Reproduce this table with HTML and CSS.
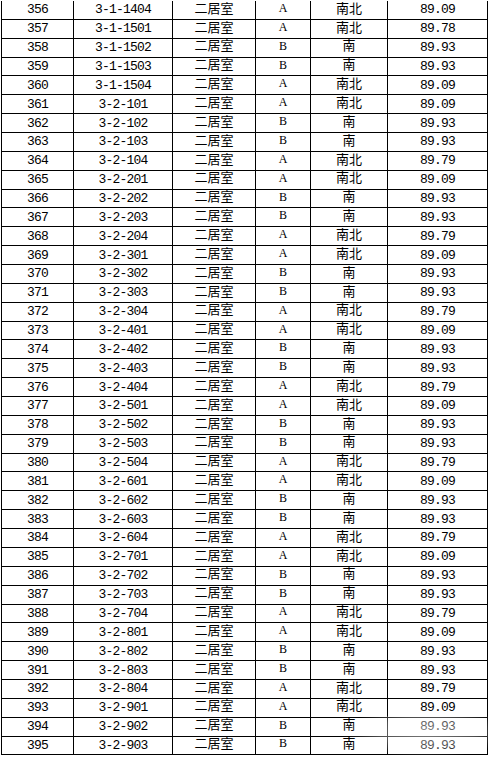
FILE: index.html
```html
<!DOCTYPE html>
<html lang="zh-CN">
<head>
<meta charset="utf-8">
<title>房源列表</title>
<link rel="stylesheet" href="styles.css">
</head>
<body>
<div class="sheet">
<table class="units">
<colgroup>
<col class="c-no"><col class="c-room"><col class="c-type"><col class="c-kind"><col class="c-dir"><col class="c-area">
</colgroup>
<tbody>
<tr><td class="num">356</td><td class="num">3-1-1404</td><td class="cjk">二居室</td><td class="lat">A</td><td class="cjk">南北</td><td class="num">89.09</td></tr>
<tr><td class="num">357</td><td class="num">3-1-1501</td><td class="cjk">二居室</td><td class="lat">A</td><td class="cjk">南北</td><td class="num">89.78</td></tr>
<tr><td class="num">358</td><td class="num">3-1-1502</td><td class="cjk">二居室</td><td class="lat">B</td><td class="cjk">南</td><td class="num">89.93</td></tr>
<tr><td class="num">359</td><td class="num">3-1-1503</td><td class="cjk">二居室</td><td class="lat">B</td><td class="cjk">南</td><td class="num">89.93</td></tr>
<tr><td class="num">360</td><td class="num">3-1-1504</td><td class="cjk">二居室</td><td class="lat">A</td><td class="cjk">南北</td><td class="num">89.09</td></tr>
<tr><td class="num">361</td><td class="num">3-2-101</td><td class="cjk">二居室</td><td class="lat">A</td><td class="cjk">南北</td><td class="num">89.09</td></tr>
<tr><td class="num">362</td><td class="num">3-2-102</td><td class="cjk">二居室</td><td class="lat">B</td><td class="cjk">南</td><td class="num">89.93</td></tr>
<tr><td class="num">363</td><td class="num">3-2-103</td><td class="cjk">二居室</td><td class="lat">B</td><td class="cjk">南</td><td class="num">89.93</td></tr>
<tr><td class="num">364</td><td class="num">3-2-104</td><td class="cjk">二居室</td><td class="lat">A</td><td class="cjk">南北</td><td class="num">89.79</td></tr>
<tr><td class="num">365</td><td class="num">3-2-201</td><td class="cjk">二居室</td><td class="lat">A</td><td class="cjk">南北</td><td class="num">89.09</td></tr>
<tr><td class="num">366</td><td class="num">3-2-202</td><td class="cjk">二居室</td><td class="lat">B</td><td class="cjk">南</td><td class="num">89.93</td></tr>
<tr><td class="num">367</td><td class="num">3-2-203</td><td class="cjk">二居室</td><td class="lat">B</td><td class="cjk">南</td><td class="num">89.93</td></tr>
<tr><td class="num">368</td><td class="num">3-2-204</td><td class="cjk">二居室</td><td class="lat">A</td><td class="cjk">南北</td><td class="num">89.79</td></tr>
<tr><td class="num">369</td><td class="num">3-2-301</td><td class="cjk">二居室</td><td class="lat">A</td><td class="cjk">南北</td><td class="num">89.09</td></tr>
<tr><td class="num">370</td><td class="num">3-2-302</td><td class="cjk">二居室</td><td class="lat">B</td><td class="cjk">南</td><td class="num">89.93</td></tr>
<tr><td class="num">371</td><td class="num">3-2-303</td><td class="cjk">二居室</td><td class="lat">B</td><td class="cjk">南</td><td class="num">89.93</td></tr>
<tr><td class="num">372</td><td class="num">3-2-304</td><td class="cjk">二居室</td><td class="lat">A</td><td class="cjk">南北</td><td class="num">89.79</td></tr>
<tr><td class="num">373</td><td class="num">3-2-401</td><td class="cjk">二居室</td><td class="lat">A</td><td class="cjk">南北</td><td class="num">89.09</td></tr>
<tr><td class="num">374</td><td class="num">3-2-402</td><td class="cjk">二居室</td><td class="lat">B</td><td class="cjk">南</td><td class="num">89.93</td></tr>
<tr><td class="num">375</td><td class="num">3-2-403</td><td class="cjk">二居室</td><td class="lat">B</td><td class="cjk">南</td><td class="num">89.93</td></tr>
<tr><td class="num">376</td><td class="num">3-2-404</td><td class="cjk">二居室</td><td class="lat">A</td><td class="cjk">南北</td><td class="num">89.79</td></tr>
<tr><td class="num">377</td><td class="num">3-2-501</td><td class="cjk">二居室</td><td class="lat">A</td><td class="cjk">南北</td><td class="num">89.09</td></tr>
<tr><td class="num">378</td><td class="num">3-2-502</td><td class="cjk">二居室</td><td class="lat">B</td><td class="cjk">南</td><td class="num">89.93</td></tr>
<tr><td class="num">379</td><td class="num">3-2-503</td><td class="cjk">二居室</td><td class="lat">B</td><td class="cjk">南</td><td class="num">89.93</td></tr>
<tr><td class="num">380</td><td class="num">3-2-504</td><td class="cjk">二居室</td><td class="lat">A</td><td class="cjk">南北</td><td class="num">89.79</td></tr>
<tr><td class="num">381</td><td class="num">3-2-601</td><td class="cjk">二居室</td><td class="lat">A</td><td class="cjk">南北</td><td class="num">89.09</td></tr>
<tr><td class="num">382</td><td class="num">3-2-602</td><td class="cjk">二居室</td><td class="lat">B</td><td class="cjk">南</td><td class="num">89.93</td></tr>
<tr><td class="num">383</td><td class="num">3-2-603</td><td class="cjk">二居室</td><td class="lat">B</td><td class="cjk">南</td><td class="num">89.93</td></tr>
<tr><td class="num">384</td><td class="num">3-2-604</td><td class="cjk">二居室</td><td class="lat">A</td><td class="cjk">南北</td><td class="num">89.79</td></tr>
<tr><td class="num">385</td><td class="num">3-2-701</td><td class="cjk">二居室</td><td class="lat">A</td><td class="cjk">南北</td><td class="num">89.09</td></tr>
<tr><td class="num">386</td><td class="num">3-2-702</td><td class="cjk">二居室</td><td class="lat">B</td><td class="cjk">南</td><td class="num">89.93</td></tr>
<tr><td class="num">387</td><td class="num">3-2-703</td><td class="cjk">二居室</td><td class="lat">B</td><td class="cjk">南</td><td class="num">89.93</td></tr>
<tr><td class="num">388</td><td class="num">3-2-704</td><td class="cjk">二居室</td><td class="lat">A</td><td class="cjk">南北</td><td class="num">89.79</td></tr>
<tr><td class="num">389</td><td class="num">3-2-801</td><td class="cjk">二居室</td><td class="lat">A</td><td class="cjk">南北</td><td class="num">89.09</td></tr>
<tr><td class="num">390</td><td class="num">3-2-802</td><td class="cjk">二居室</td><td class="lat">B</td><td class="cjk">南</td><td class="num">89.93</td></tr>
<tr><td class="num">391</td><td class="num">3-2-803</td><td class="cjk">二居室</td><td class="lat">B</td><td class="cjk">南</td><td class="num">89.93</td></tr>
<tr><td class="num">392</td><td class="num">3-2-804</td><td class="cjk">二居室</td><td class="lat">A</td><td class="cjk">南北</td><td class="num">89.79</td></tr>
<tr><td class="num">393</td><td class="num">3-2-901</td><td class="cjk">二居室</td><td class="lat">A</td><td class="cjk">南北</td><td class="num">89.09</td></tr>
<tr><td class="num">394</td><td class="num">3-2-902</td><td class="cjk">二居室</td><td class="lat">B</td><td class="cjk">南</td><td class="num">89.93</td></tr>
<tr><td class="num">395</td><td class="num">3-2-903</td><td class="cjk">二居室</td><td class="lat">B</td><td class="cjk">南</td><td class="num">89.93</td></tr>
</tbody>
</table>
<div class="watermark" aria-hidden="true"></div>
</div>
</body>
</html>
```

FILE: styles.css
```css
html, body {
  margin: 0;
  padding: 0;
  background: #ffffff;
}

body {
  font-family: "Liberation Mono", monospace;
  color: #000000;
}

.sheet {
  position: relative;
  padding: 1px 0 0 1px;
}

.units {
  table-layout: fixed;
  border-collapse: separate;
  border-spacing: 0;
  width: 487px;
}

.c-no   { width: 73px; }
.c-room { width: 99px; }
.c-type { width: 83px; }
.c-kind { width: 55px; }
.c-dir  { width: 77px; }
.c-area { width: 100px; }

.units tr {
  height: 18.87px;
}

.units td {
  box-sizing: border-box;
  height: 18.87px;
  padding: 0;
  border-right: 1px solid #000000;
  border-bottom: 1px solid #000000;
  text-align: center;
  vertical-align: middle;
  line-height: 12px;
  white-space: nowrap;
}

.units td:first-child {
  border-left: 1px solid #000000;
}

.units td.num {
  font-family: "Liberation Mono", monospace;
  font-size: 13px;
  letter-spacing: -0.8px;
  padding-top: 1px;
}

.units td.cjk {
  font-family: "Noto Sans CJK SC", sans-serif;
  font-size: 13px;
  padding-bottom: 4.5px;
}

.units td.lat {
  font-family: "Liberation Serif", serif;
  font-size: 12px;
  padding-bottom: 4px;
}

.watermark {
  position: absolute;
  left: 350px;
  top: 716px;
  width: 140px;
  height: 40px;
  background: radial-gradient(ellipse at 55% 40%, rgba(255,255,255,0.5) 0%, rgba(255,255,255,0.3) 45%, rgba(255,255,255,0) 75%);
  pointer-events: none;
}
```
